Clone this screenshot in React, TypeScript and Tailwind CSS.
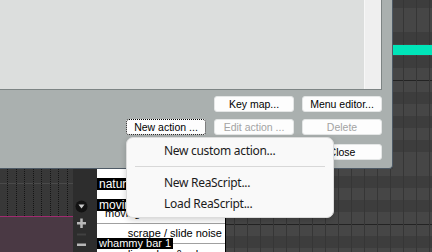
import React, { ReactElement } from "react";

const BLACK_KEYS = [1, 3, 6, 8, 10];

// piano-roll grid, drawn in page coordinates so both pieces line up
function PianoGrid({ x0, y0, w, h }: { x0: number; y0: number; w: number; h: number }): ReactElement {
  const rows: ReactElement[] = [];
  const rStart = Math.floor((y0 - 80) / 12);
  const rEnd = Math.ceil((y0 + h - 80) / 12);
  for (let r = rStart; r <= rEnd; r++) {
    const semi = (((-(r + 1)) % 12) + 12) % 12;
    const top = 80 + 12 * r - y0;
    rows.push(
      <rect
        key={`r${r}`}
        x={0}
        y={top}
        width={w}
        height={12}
        fill={BLACK_KEYS.includes(semi) ? "#3d3d3d" : "#464646"}
      />
    );
    if (semi === 11) {
      rows.push(<rect key={`o${r}`} x={0} y={top} width={w} height={1} fill="#232323" />);
    }
  }
  const cols: ReactElement[] = [];
  for (let gx = Math.ceil(x0 / 13) * 13; gx < x0 + w; gx += 13) {
    cols.push(<rect key={`c${gx}`} x={gx - x0} y={0} width={1} height={h} fill="#363636" />);
  }
  return (
    <svg width={w} height={h} className="block">
      {rows}
      {cols}
    </svg>
  );
}

function DlgButton({ label, disabled, focused }: { label: string; disabled?: boolean; focused?: boolean }): ReactElement {
  return (
    <div
      className={`flex h-[16px] w-[80px] items-center justify-center rounded-[3px] bg-[#fdfdfd] text-[10.5px] leading-none ${
        disabled ? "text-[#a3a3a3]" : "text-black"
      } ${focused ? "outline-1 outline-dotted outline-offset-[-1px] outline-black" : "border border-[#e4e6e6]"}`}
    >
      {label}
    </div>
  );
}

function TrackLanes(): ReactElement {
  const dots = [7, 16, 24, 33, 41, 50, 58, 67];
  return (
    <svg width={73} height={83} className="block">
      <rect x={0} y={0} width={73} height={47} fill="#383838" />
      <rect x={0} y={14} width={73} height={1} fill="#4a4a4a" />
      <rect x={0} y={47} width={73} height={1} fill="#a02c70" />
      <rect x={0} y={48} width={73} height={35} fill="#4a3944" />
      {dots.map((d) =>
        Array.from({ length: 24 }).map((_, i) => (
          <rect key={`${d}-${i}`} x={d} y={i * 2} width={1} height={1} fill="#151515" />
        ))
      )}
    </svg>
  );
}

function LaneControls(): ReactElement {
  return (
    <svg width={24} height={83} className="block">
      <rect width={24} height={83} fill="#2d2d2d" />
      <circle cx={8.5} cy={37.5} r={6} fill="#121212" />
      <path d="M5.5 35.5 L11.5 35.5 L8.5 39.5 Z" fill="#c9c9c9" />
      <rect x={4} y={53} width={9} height={2.5} fill="#b8b8b8" />
      <rect x={7.25} y={49.5} width={2.5} height={9.5} fill="#b8b8b8" />
      <rect x={4} y={64.5} width={9} height={2} fill="#414141" />
      <rect x={4} y={74.5} width={9} height={2.5} fill="#b8b8b8" />
    </svg>
  );
}

function ClipList(): ReactElement {
  return (
    <div className="relative h-full w-[129px] overflow-hidden border-r border-black bg-white text-[11px] text-black [font-family:'Liberation_Sans',Arial,sans-serif]">
      <div className="flex flex-col">
        <div className="h-[15px] border-b border-[#a0a0a0]" />
        <div className="h-[20px] border-b border-[#a0a0a0]" />
        <div className="flex h-[20px] items-center border-b border-[#a0a0a0] pl-[8px]">moving</div>
        <div className="flex h-[20px] items-center justify-end border-b border-[#a0a0a0] pr-[3px]">scrape / slide noise</div>
        <div className="flex h-[20px] items-center justify-end pr-[3px]">dive a bar &amp; release</div>
      </div>
      {/* item name tags drawn over the rows */}
      <span className="absolute top-[9px] left-0 bg-black px-[2px] text-[12px] leading-[12px] text-white">natural harm</span>
      <span className="absolute top-[30px] left-0 bg-black px-[2px] text-[12px] leading-[12px] text-white">moving gliss</span>
      <span className="absolute top-[69px] left-0 bg-black px-[2px] text-[11px] leading-[11px] text-white">whammy bar 1</span>
    </div>
  );
}

function PopupMenu(): ReactElement {
  return (
    <div className="absolute top-[137px] left-[126px] w-[208px] rounded-[7px] border border-[#dcdcdc] bg-[#f9f9f9] pt-[3px] pb-[2px] text-[12px] tracking-[-0.3px] text-[#1b1b1b] shadow-[0_2px_6px_rgba(0,0,0,0.18)] [font-family:'Noto_Sans','Open_Sans',sans-serif]">
      <div className="flex h-[20px] items-center pl-[37px]">New custom action...</div>
      <div className="flex h-[11px] items-center px-[8px]">
        <div className="h-[1px] w-full bg-[#d8d8d8]" />
      </div>
      <div className="flex h-[21px] items-center pl-[37px]">New ReaScript...</div>
      <div className="flex h-[22px] items-center pl-[37px]">Load ReaScript...</div>
    </div>
  );
}

function App(): ReactElement {
  return (
    <div className="relative h-[252px] w-[432px] overflow-hidden bg-[#3d3d3d] [font-family:'Liberation_Sans',Arial,sans-serif]">
      <div className="flex h-[169px]">
        {/* action list dialog */}
        <div className="flex h-[169px] w-[393px] flex-col rounded-br-[4px] border-r border-b border-[#4e5a66] bg-[#aab0af]">
          <div className="flex h-[90px] w-[382px] border-r border-b border-[#7d8484]">
            <div className="flex-1 bg-[#dcdedd]" />
            <div className="w-[17px] border-l border-[#f7f7f7] bg-[#efefef]" />
          </div>
          <div className="mt-[6px] flex justify-end gap-[8px] pr-[10px]">
            <DlgButton label="Key map..." />
            <DlgButton label="Menu editor..." />
          </div>
          <div className="mt-[7px] flex justify-end gap-[8px] pr-[10px]">
            <DlgButton label="New action ..." focused />
            <DlgButton label="Edit action ..." disabled />
            <DlgButton label="Delete" disabled />
          </div>
          <div className="mt-[9px] flex justify-end pr-[10px]">
            <DlgButton label="Close" />
          </div>
        </div>
        <div className="flex-1">
          <div className="relative">
            <PianoGrid x0={393} y0={0} w={39} h={169} />
            <div className="absolute top-[45px] left-0 h-[10px] w-[39px] bg-[#00e5b9]" />
          </div>
        </div>
      </div>
      <div className="flex h-[83px]">
        <TrackLanes />
        <LaneControls />
        <ClipList />
        <div className="flex-1">
          <PianoGrid x0={226} y0={169} w={206} h={83} />
        </div>
      </div>
      <PopupMenu />
    </div>
  );
}

export default App;
